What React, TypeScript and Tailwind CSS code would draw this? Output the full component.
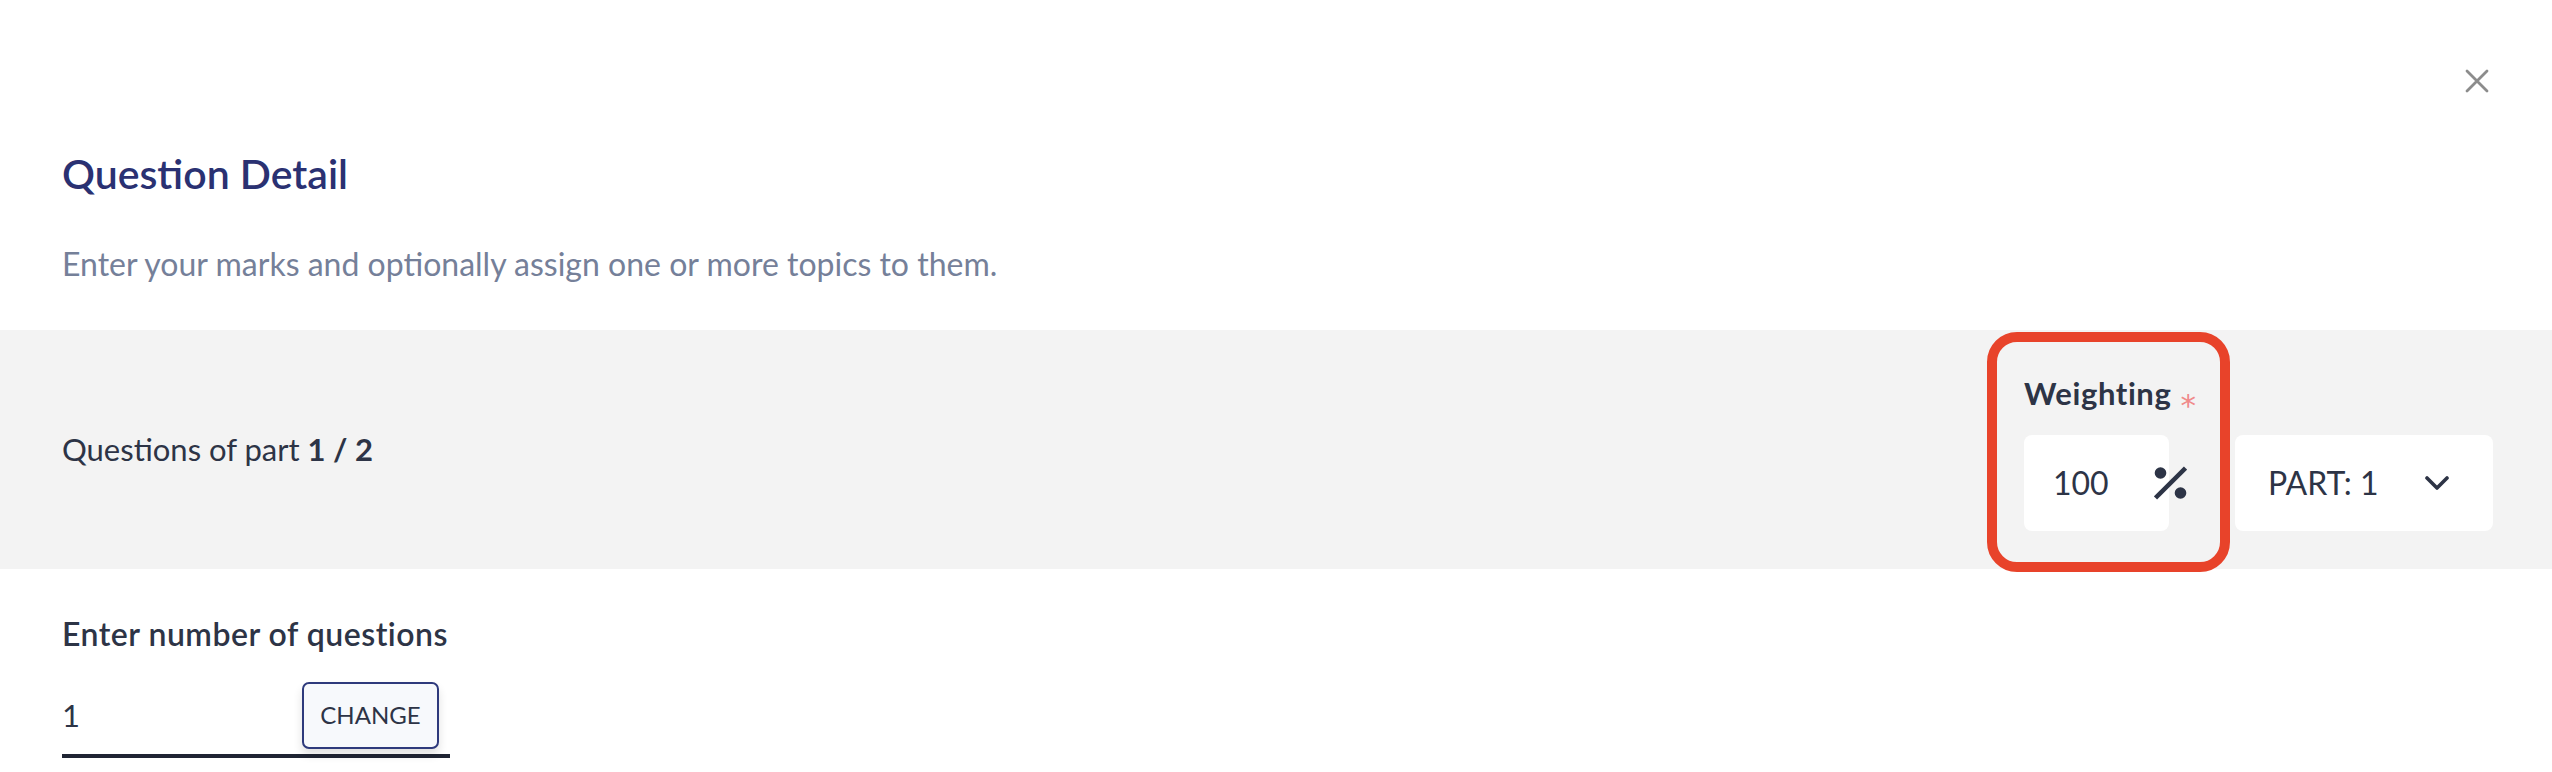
import React from 'react';

const CloseIcon: React.FC = () => (
  <svg width="24" height="24" viewBox="0 0 24 24" fill="none">
    <path d="M2 2L22 22M22 2L2 22" stroke="#8c8c8c" strokeWidth="2.8" strokeLinecap="round" />
  </svg>
);

const PercentIcon: React.FC = () => (
  <svg width="33" height="34" viewBox="0 0 33 34" fill="none">
    <circle cx="6.5" cy="7" r="5.8" fill="#2d3446" />
    <circle cx="26.5" cy="27" r="5.8" fill="#2d3446" />
    <path d="M1.5 32L31.5 2" stroke="#2d3446" strokeWidth="4.5" />
  </svg>
);

const Chevron: React.FC = () => (
  <svg width="24" height="14" viewBox="0 0 24 14" fill="none">
    <path d="M2 2L12 12L22 2" stroke="#2d3446" strokeWidth="3.6" strokeLinecap="round" strokeLinejoin="round" />
  </svg>
);

const App: React.FC = () => {
  return (
    <div className="relative w-[2552px] h-[772px] overflow-hidden bg-white font-['Lato',sans-serif] text-[#2d3446]">
      {/* header */}
      <div className="flex justify-end pt-[69px] pr-[63px]">
        <button className="w-[24px] h-[24px]">
          <CloseIcon />
        </button>
      </div>
      <div className="px-[62px]">
        <h1 className="mt-[56px] text-[41px] leading-[1.2] font-semibold text-[#2a3172]">Question Detail</h1>
        <p className="mt-[47px] text-[32px] leading-[1.2] text-[#758099]">
          Enter your marks and optionally assign one or more topics to them.
        </p>
      </div>

      {/* part band */}
      <div className="mt-[46px] h-[239px] bg-[#f3f3f3] flex justify-between items-start pl-[62px] pr-[59px]">
        <p className="pt-[101px] text-[31px] leading-[1.2]">
          Questions of part <span className="font-bold">1 / 2</span>
        </p>
        <div className="pt-[45px] flex flex-col">
          <label className="text-[31px] leading-[1.2] font-bold tracking-[0.6px]">
            Weighting
            <span className="inline-block ml-[9px] translate-y-[11px] font-['DejaVu_Sans',sans-serif] text-[31px] font-normal leading-none text-[#f08a8a]">
              *
            </span>
          </label>
          <div className="mt-[23px] flex items-center">
            <div className="w-[145px] h-[96px] bg-white rounded-[8px] flex items-center pl-[29px] text-[32px]">100</div>
            <div className="-ml-[15px]">
              <PercentIcon />
            </div>
            <div className="ml-[48px] w-[258px] h-[96px] bg-white rounded-[8px] flex items-center justify-between pl-[33px] pr-[44px] text-[32px]">
              <span>PART: 1</span>
              <Chevron />
            </div>
          </div>
        </div>
      </div>

      {/* number of questions */}
      <div className="px-[62px]">
        <h2 className="mt-[46px] text-[32px] leading-[1.2] font-semibold tracking-[0.5px]">Enter number of questions</h2>
        <div className="mt-[29px] w-[388px] flex items-center justify-between pb-[5px] pr-[11px] border-b-4 border-[#1f2433]">
          <span className="text-[31px] leading-[1.2]">1</span>
          <button className="w-[137px] h-[67px] rounded-[7px] border-2 border-[#2e3a7c] bg-[#f7f9fc] shadow-[0_6px_10px_rgba(0,0,0,0.12)] text-[24px] text-[#2d3446]">
            CHANGE
          </button>
        </div>
      </div>

      {/* highlight annotation */}
      <div className="absolute left-[1987px] top-[332px] w-[243px] h-[240px] rounded-[30px] border-[10px] border-[#e8432a]" />
    </div>
  );
};

export default App;
